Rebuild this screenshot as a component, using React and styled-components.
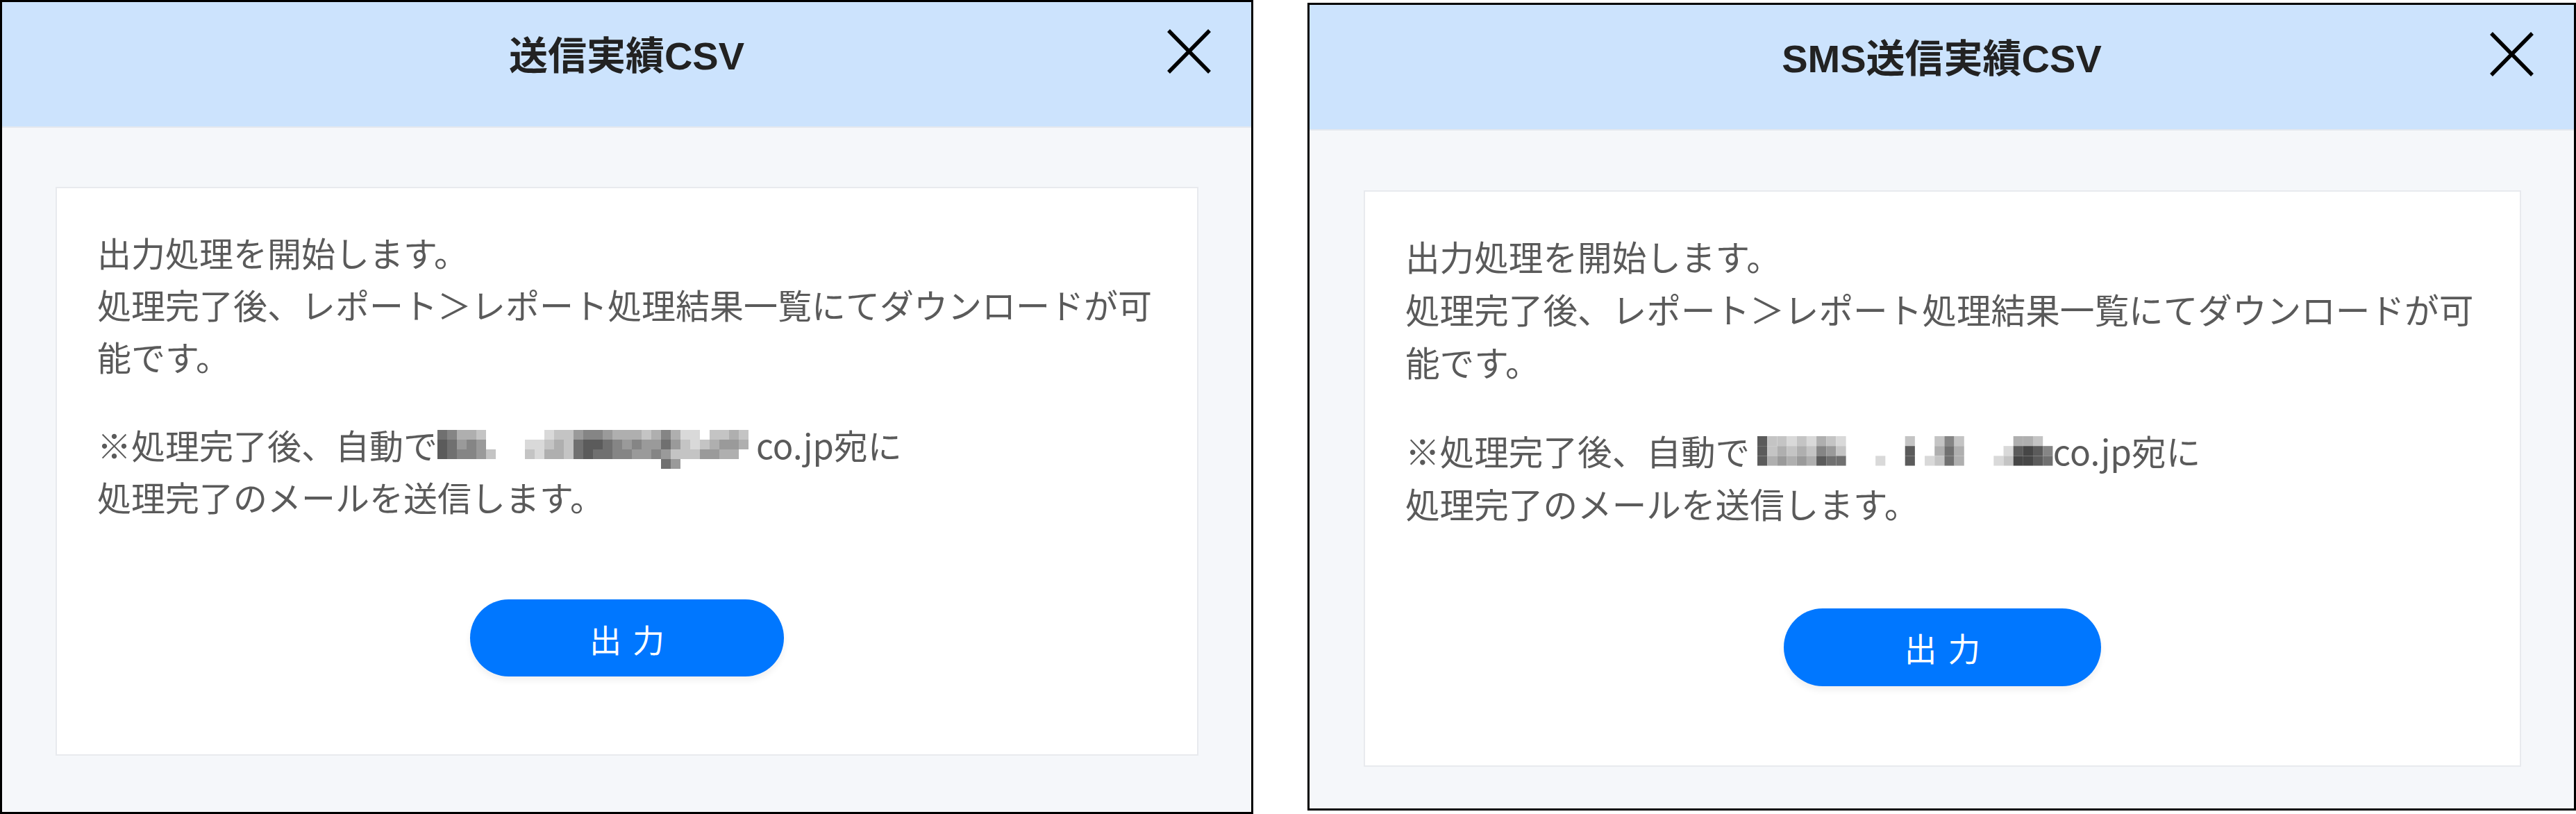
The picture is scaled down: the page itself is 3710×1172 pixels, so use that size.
import React from "react";
import styled, { createGlobalStyle } from "styled-components";

const GlobalStyle = createGlobalStyle`
  html, body {
    margin: 0;
    padding: 0;
    background: #ffffff;
  }
  * {
    box-sizing: border-box;
  }
`;

// sizes inside the card follow the panel's --k factor
const u = (n) => `calc(${n}px * var(--k))`;

const JP = `"Noto Sans CJK JP", "Noto Sans", sans-serif`;

const Page = styled.div`
  display: flex;
  align-items: flex-start;
  gap: 78px;
  width: 3710px;
`;

const Panel = styled.section`
  --k: ${({ $k }) => $k};
  width: ${({ $w }) => $w}px;
  flex: none;
  margin-top: ${({ $top }) => $top}px;
  border: 3px solid #000;
  background: #f5f7fa;
  display: flex;
  flex-direction: column;
`;

const Header = styled.header`
  display: grid;
  grid-template-columns: 1fr auto 1fr;
  height: 181px;
  background: #cce3fd;
  border-bottom: 2px solid #e4e8ee;
`;

const Title = styled.h2`
  grid-column: 2;
  margin: 50px 0 0;
  font-family: "Liberation Sans", ${JP};
  font-weight: 700;
  font-size: 56px;
  line-height: 1;
  color: #222;
  white-space: nowrap;
`;

const CloseButton = styled.button`
  grid-column: 3;
  justify-self: end;
  align-self: start;
  margin: 39px 56px 0 0;
  padding: 0;
  width: 67px;
  height: 64px;
  border: none;
  background: none;
  cursor: pointer;
  svg {
    display: block;
  }
`;

const Body = styled.div`
  padding: ${({ $pad }) => $pad};
`;

const Card = styled.div`
  background: #fff;
  border: 2px solid #e8eaee;
  padding: ${u(54)} 58px ${u(112)};
`;

const Message = styled.p`
  margin: 0;
  font-family: ${JP};
  font-size: ${u(49)};
  line-height: ${u(75)};
  color: #5a5a5a;
  & + & {
    margin-top: ${u(52)};
  }
`;

const MosaicSvg = styled.svg`
  display: inline-block;
  vertical-align: ${u(-14)};
  height: ${u(56)};
  width: auto;
`;

const Actions = styled.div`
  display: flex;
  justify-content: center;
  margin-top: ${u(111)};
`;

const OutputButton = styled.button`
  width: ${u(452)};
  height: ${u(111)};
  border: none;
  border-radius: 999px;
  background: #0077ff;
  color: #fff;
  font-family: ${JP};
  font-size: ${u(46)};
  letter-spacing: ${u(16)};
  padding: 0 0 0 ${u(16)};
  box-shadow: 0 6px 10px rgba(0, 0, 0, 0.06);
  cursor: pointer;
`;

const shade = (d) => {
  const v = 238 - d * 21;
  return `rgb(${v},${v},${v})`;
};

const Mosaic = ({ rows }) => {
  const cell = 14;
  const cols = Math.max(...rows.map((r) => r.length));
  return (
    <MosaicSvg viewBox={`0 0 ${cols * cell} ${cell * 4}`} aria-hidden="true">
      {rows.map((row, y) =>
        row.split("").map((c, x) =>
          c === "." ? null : (
            <rect
              key={`${x}-${y}`}
              x={x * cell}
              y={y * cell}
              width={cell}
              height={cell}
              fill={shade(Number(c))}
            />
          )
        )
      )}
    </MosaicSvg>
  );
};

const CloseIcon = () => (
  <svg width="67" height="64" viewBox="0 0 67 64">
    <path d="M4 2 L63 62 M63 2 L4 62" stroke="#000" strokeWidth="5.5" fill="none" />
  </svg>
);

const dialogs = [
  {
    title: "送信実績CSV",
    w: 1805,
    top: 0,
    k: 1,
    pad: "85px 76px 81px 77px",
    gap: "",
    after: " co.jp宛に",
    mosaic: [
      "65332......1224554333235311.2232",
      "76454....11232677654544642123443",
      "765542...2133267665544542224433",
      ".......................64.......",
    ],
  },
  {
    title: "SMS送信実績CSV",
    w: 1827,
    top: 4,
    k: 1.013,
    pad: "86px 76px 60px 78px",
    gap: " ",
    after: "co.jp宛に",
    mosaic: [
      "722121321......2..252.....332.",
      "723232542......7..363....17875",
      "734343766...1..7.1263...128876",
    ],
  },
];

const Dialog = ({ d }) => (
  <Panel $w={d.w} $top={d.top} $k={d.k}>
    <Header>
      <Title>{d.title}</Title>
      <CloseButton aria-label="閉じる">
        <CloseIcon />
      </CloseButton>
    </Header>
    <Body $pad={d.pad}>
      <Card>
        <Message>
          出力処理を開始します。
          <br />
          処理完了後、レポート＞レポート処理結果一覧にてダウンロードが可
          <br />
          能です。
        </Message>
        <Message>
          ※処理完了後、自動で{d.gap}
          <Mosaic rows={d.mosaic} />
          {d.after}
          <br />
          処理完了のメールを送信します。
        </Message>
        <Actions>
          <OutputButton>出力</OutputButton>
        </Actions>
      </Card>
    </Body>
  </Panel>
);

const App = () => (
  <>
    <GlobalStyle />
    <Page>
      {dialogs.map((d) => (
        <Dialog key={d.title} d={d} />
      ))}
    </Page>
  </>
);

export default App;
